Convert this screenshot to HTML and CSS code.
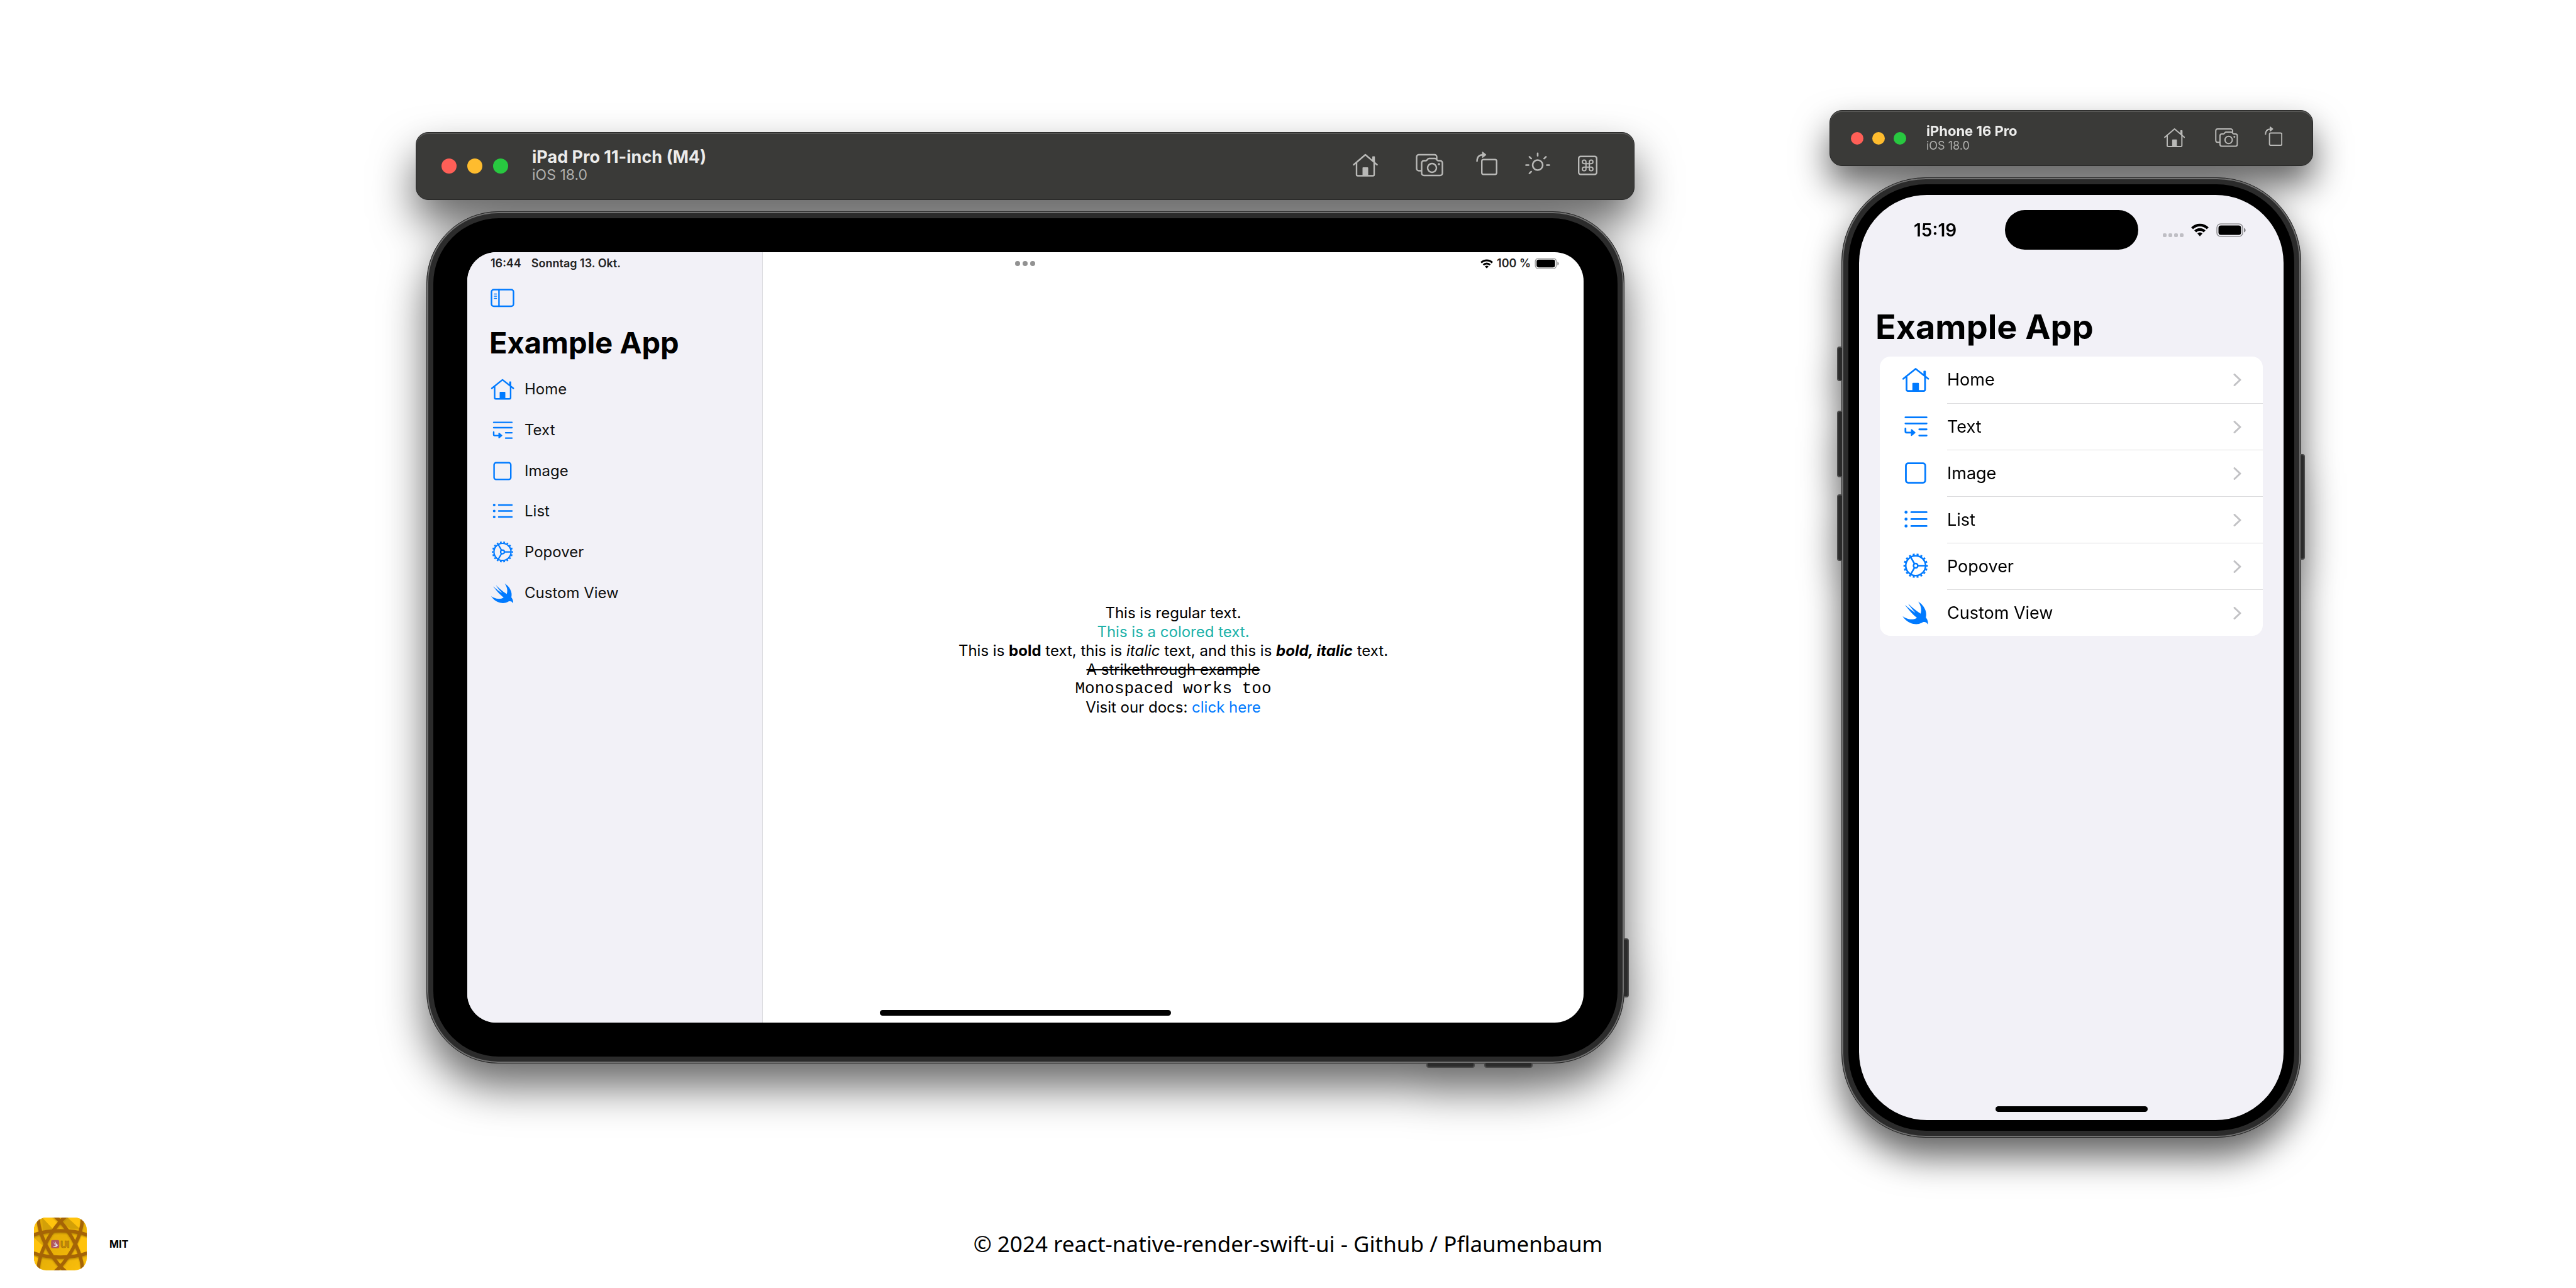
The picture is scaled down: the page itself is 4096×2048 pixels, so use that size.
FILE: index.html
```html
<!DOCTYPE html>
<html lang="en">
<head>
<meta charset="utf-8">
<meta name="viewport" content="width=device-width, initial-scale=1">
<title>react-native-render-swift-ui</title>
<link rel="stylesheet" href="styles.css">
</head>
<body>
<svg class="sprite" aria-hidden="true">
  <symbol id="tool-home" viewBox="0 0 40 48">
    <g fill="none" stroke="currentColor" stroke-width="2.4" stroke-linecap="round" stroke-linejoin="round">
      <path d="M1.4 22 20 6l18.6 16"/><path d="M6 19v18.5a2 2 0 0 0 2 2h24a2 2 0 0 0 2-2V19"/>
    </g>
    <path fill="currentColor" d="M31 9.5a1 1 0 0 1 1-1h2.200a1 1 0 0 1 1 1V19L31 15.500zM15.500 27a1 1 0 0 1 1-1h7a1 1 0 0 1 1 1v12h-9z"/>
  </symbol>
  <symbol id="tool-camera" viewBox="0 0 44 48">
    <g fill="none" stroke="currentColor" stroke-width="2.4" stroke-linecap="round" stroke-linejoin="round">
      <path d="M8.500 31.500H5a3.500 3.500 0 0 1-3.500-3.500V9.500A3.500 3.500 0 0 1 5 6h25a3.500 3.500 0 0 1 3.500 3.500v3"/>
      <path d="M13 15.500h3.200c1 0 1.500-.5 2-1.200l.8-1.200c.6-.8 1.200-1.100 2.200-1.100h9.600c1 0 1.600.3 2.200 1.100l.8 1.200c.5.700 1 1.200 2 1.200H39a3.500 3.500 0 0 1 3.500 3.500v16.500A3.500 3.500 0 0 1 39 39H13a3.500 3.500 0 0 1-3.500-3.500V19a3.500 3.500 0 0 1 3.500-3.500z"/>
      <circle cx="26" cy="27" r="7"/>
    </g>
    <circle cx="37" cy="21" r="1.800" fill="currentColor"/>
  </symbol>
  <symbol id="tool-rotate" viewBox="0 0 34 48">
    <g fill="none" stroke="currentColor" stroke-width="2.4" stroke-linecap="round">
      <rect x="9.200" y="13.800" width="23.500" height="23.500" rx="2.500"/>
      <path stroke-linecap="butt" d="M1.500 17C1.500 10 4.500 6.500 10 6.200"/>
    </g>
    <path fill="currentColor" d="M9.600 2.200c0-.8.700-1.100 1.300-.6l5 3.900c.5.400.5.900 0 1.300l-5 4c-.6.500-1.300.2-1.300-.6z"/>
  </symbol>
  <symbol id="tool-sun" viewBox="0 0 40 48">
    <g fill="none" stroke="currentColor" stroke-width="2.600" stroke-linecap="round">
      <circle cx="20" cy="22.500" r="8"/>
      <path d="M20 3.800v4M1.500 22.500h4M34.500 22.500h4M6.900 9.400l2.800 2.800M33.100 9.400l-2.800 2.800M6.900 35.600l2.800-2.800"/>
    </g>
  </symbol>
  <symbol id="tool-command" viewBox="0 0 31 48">
    <g fill="none" stroke="currentColor" stroke-width="2.400">
      <rect x="1.200" y="8.700" width="28.600" height="28.600" rx="3"/>
      <path stroke-width="2" d="M18.200 17.300v11.400a2.850 2.850 0 1 0 2.850-2.850H9.950a2.850 2.850 0 1 0 2.850 2.850V17.300a2.850 2.850 0 1 0-2.850 2.850h11.100a2.850 2.850 0 1 0-2.850-2.850"/>
    </g>
  </symbol>

  <symbol id="nav-home" viewBox="-1 0 38 38">
    <g fill="none" stroke="currentColor" stroke-width="2.400" stroke-linecap="round" stroke-linejoin="round">
      <path d="M1 17.500 18 3.900l17.300 13.600"/><path d="M5.500 15v17.200a2 2 0 0 0 2 2h21.400a2 2 0 0 0 2-2V15"/>
    </g>
    <path fill="currentColor" d="M28.700 7.500a1 1 0 0 1 1-1h1.300a1 1 0 0 1 1 1v8l-3.300-2.600zM13.500 24a1 1 0 0 1 1-1h7a1 1 0 0 1 1 1v10h-9z"/>
  </symbol>
  <symbol id="nav-text" viewBox="-1 0 38 38">
    <g fill="none" stroke="currentColor" stroke-width="2.400" stroke-linecap="round" stroke-linejoin="round">
      <path d="M4 6.600h29M4 15h29M23 23.100h10M23 31.600h10M4 22v4a1.600 1.600 0 0 0 1.600 1.600H11"/>
    </g>
    <path fill="currentColor" d="M11.500 24c0-1 .8-1.400 1.600-.8l4.200 3.500c.6.500.6 1.100 0 1.600l-4.200 3.500c-.8.600-1.600.2-1.600-.8z"/>
  </symbol>
  <symbol id="nav-image" viewBox="-1 0 38 38">
    <rect x="4.600" y="5.800" width="26.600" height="26.600" rx="3.200" fill="none" stroke="currentColor" stroke-width="2.400"/>
  </symbol>
  <symbol id="nav-list" viewBox="-1 0 38 38">
    <path d="M12 9h21M12 18.500h21M12 28h21" fill="none" stroke="currentColor" stroke-width="2.400" stroke-linecap="round"/>
    <g fill="currentColor"><circle cx="4.800" cy="9" r="2.100"/><circle cx="4.800" cy="18.500" r="2.100"/><circle cx="4.800" cy="28" r="2.100"/></g>
  </symbol>
  <symbol id="nav-gear" viewBox="-1 0 38 38">
    <g fill="none" stroke="currentColor" stroke-width="2.200">
      <circle cx="18" cy="18.600" r="13.600"/>
      <circle cx="18" cy="18.600" r="15.600" pathLength="72" stroke-dasharray="2 2" stroke-dashoffset="1"/>
      <circle cx="18" cy="18.600" r="3"/>
      <path d="M21 18.600h10.600M16.500 16 11.200 6.800M16.500 21.200l-5.300 9.200"/>
    </g>
  </symbol>
  <symbol id="nav-swift" viewBox="-1 0 38 38">
    <path transform="translate(-4.700 -2.800) scale(1.930)" fill="currentColor" d="M13.543 3.410c4.114 2.470 6.545 7.162 5.549 11.131-.024.093-.050.181-.076.272l.002.001c2.062 2.538 1.500 5.258 1.236 4.745-1.072-2.086-3.066-1.568-4.088-1.043a6.803 6.803 0 0 1-.281.158l-.020.012-.002.002c-2.115 1.123-4.957 1.205-7.812-.022a12.568 12.568 0 0 1-5.640-4.838c.649.480 1.350.902 2.097 1.252 3.019 1.414 6.051 1.311 8.197-.002C9.651 12.730 7.101 9.670 5.146 7.191a10.628 10.628 0 0 1-1.005-1.384c2.340 2.142 6.038 4.830 7.365 5.576C8.690 8.408 6.208 4.743 6.324 4.860c4.436 4.466 8.527 6.996 8.527 6.996.154.085.270.154.360.213.085-.215.160-.437.224-.668.708-2.588-.090-5.548-1.893-7.992z"/>
  </symbol>
  <symbol id="chevron" viewBox="0 0 13 20">
    <path d="M2 1.500 11 10l-9 8.500" fill="none" stroke="currentColor" stroke-width="3" stroke-linecap="round" stroke-linejoin="round"/>
  </symbol>
  <symbol id="wifi" viewBox="0 0 28 21">
    <g fill="none" stroke="currentColor" stroke-width="4.200">
      <path d="M1.600 7.900a17.600 17.600 0 0 1 24.800 0"/><path d="M6.600 13a10.500 10.500 0 0 1 14.800 0"/>
    </g>
    <path fill="currentColor" d="M9.900 16.300a5.800 5.800 0 0 1 8.200 0L14 20.700z"/>
  </symbol>
  <symbol id="battery" viewBox="0 0 48 22">
    <rect x="1" y="1" width="41" height="20" rx="6" fill="none" stroke="currentColor" stroke-opacity=".4" stroke-width="1.600"/>
    <rect x="3.500" y="3.500" width="36" height="15" rx="4" fill="currentColor"/>
    <path d="M44 7.500c3.600 1 3.600 6 0 7z" fill="currentColor" fill-opacity=".45"/>
  </symbol>
</svg>

<main class="stage">
  <section class="simulator simulator--tablet" aria-label="iPad simulator">
    <header class="toolbar">
      <div class="lights"><span class="light light--close"></span><span class="light light--min"></span><span class="light light--zoom"></span></div>
      <div class="device-name"><h2 class="device-title">iPad Pro 11-inch (M4)</h2><p class="device-os">iOS 18.0</p></div>
      <div class="tools">
        <button class="tool tool--spaced" type="button" aria-label="Home"><svg class="tool-icon" viewBox="0 0 40 48"><use href="#tool-home"/></svg></button>
        <button class="tool tool--spaced" type="button" aria-label="Screenshot"><svg class="tool-icon" viewBox="0 0 44 48"><use href="#tool-camera"/></svg></button>
        <button class="tool" type="button" aria-label="Rotate"><svg class="tool-icon" viewBox="0 0 34 48"><use href="#tool-rotate"/></svg></button>
        <button class="tool" type="button" aria-label="Appearance"><svg class="tool-icon" viewBox="0 0 40 48"><use href="#tool-sun"/></svg></button>
        <button class="tool" type="button" aria-label="Keyboard shortcuts"><svg class="tool-icon" viewBox="0 0 31 48"><use href="#tool-command"/></svg></button>
      </div>
    </header>
    <div class="frame">
      <span class="key key--tablet-power"></span><span class="key key--tablet-up"></span><span class="key key--tablet-down"></span>
      <div class="bezel">
        <div class="tablet-screen">
          <aside class="sidebar">
            <button class="sidebar-toggle" type="button" aria-label="Toggle sidebar">
              <svg class="sidebar-toggle-icon" viewBox="0 0 38 30" fill="none" stroke="currentColor" stroke-width="2.400" stroke-linecap="round">
                <rect x="1.500" y="1.500" width="35" height="26.500" rx="3.500"/><path d="M13.400 1.500V28"/><path stroke-width="1.600" d="M6 8.500h3.500M6 12h3.500M6 15.500h3.500"/>
              </svg>
            </button>
            <h1 class="app-title">Example App</h1>
            <nav class="menu">
              <a class="menu-item" href="#home"><svg class="menu-icon"><use href="#nav-home"/></svg>Home</a>
              <a class="menu-item" href="#text"><svg class="menu-icon"><use href="#nav-text"/></svg>Text</a>
              <a class="menu-item" href="#image"><svg class="menu-icon"><use href="#nav-image"/></svg>Image</a>
              <a class="menu-item" href="#list"><svg class="menu-icon"><use href="#nav-list"/></svg>List</a>
              <a class="menu-item" href="#popover"><svg class="menu-icon"><use href="#nav-gear"/></svg>Popover</a>
              <a class="menu-item" href="#custom"><svg class="menu-icon"><use href="#nav-swift"/></svg>Custom View</a>
            </nav>
          </aside>
          <div class="detail">
            <p>This is regular text.</p>
            <p class="colored">This is a colored text.</p>
            <p>This is <b>bold</b> text, this is <i>italic</i> text, and this is <b><i>bold, italic</i></b> text.</p>
            <p><s>A strikethrough example</s></p>
            <p class="mono">Monospaced works too</p>
            <p>Visit our docs: <a class="link" href="#docs">click here</a></p>
          </div>
          <div class="tablet-status">
            <div class="tablet-clock"><span>16:44</span><span>Sonntag 13. Okt.</span></div>
            <div class="multitask"><span></span><span></span><span></span></div>
            <div class="tablet-power"><svg class="wifi-icon"><use href="#wifi"/></svg><span>100 %</span><svg class="battery-icon"><use href="#battery"/></svg></div>
          </div>
          <div class="home-bar"></div>
        </div>
      </div>
    </div>
  </section>

  <section class="simulator simulator--phone" aria-label="iPhone simulator">
    <header class="toolbar">
      <div class="lights"><span class="light light--close"></span><span class="light light--min"></span><span class="light light--zoom"></span></div>
      <div class="device-name"><h2 class="device-title">iPhone 16 Pro</h2><p class="device-os">iOS 18.0</p></div>
      <div class="tools">
        <button class="tool tool--spaced" type="button" aria-label="Home"><svg class="tool-icon" viewBox="0 0 40 48"><use href="#tool-home"/></svg></button>
        <button class="tool tool--spaced" type="button" aria-label="Screenshot"><svg class="tool-icon" viewBox="0 0 44 48"><use href="#tool-camera"/></svg></button>
        <button class="tool" type="button" aria-label="Rotate"><svg class="tool-icon" viewBox="0 0 34 48"><use href="#tool-rotate"/></svg></button>
      </div>
    </header>
    <div class="frame">
      <span class="key key--phone-action"></span><span class="key key--phone-up"></span><span class="key key--phone-down"></span><span class="key key--phone-power"></span>
      <div class="bezel">
        <div class="phone-screen">
          <div class="phone-status">
            <span class="phone-clock">15:19</span>
            <span class="island"></span>
            <div class="phone-signals"><span class="cellular"><i></i><i></i><i></i><i></i></span><svg class="wifi-icon"><use href="#wifi"/></svg><svg class="battery-icon"><use href="#battery"/></svg></div>
          </div>
          <h1 class="app-title">Example App</h1>
          <nav class="card">
            <a class="card-item" href="#home"><svg class="menu-icon"><use href="#nav-home"/></svg><span class="card-label">Home<svg class="chevron"><use href="#chevron"/></svg></span></a>
            <a class="card-item" href="#text"><svg class="menu-icon"><use href="#nav-text"/></svg><span class="card-label">Text<svg class="chevron"><use href="#chevron"/></svg></span></a>
            <a class="card-item" href="#image"><svg class="menu-icon"><use href="#nav-image"/></svg><span class="card-label">Image<svg class="chevron"><use href="#chevron"/></svg></span></a>
            <a class="card-item" href="#list"><svg class="menu-icon"><use href="#nav-list"/></svg><span class="card-label">List<svg class="chevron"><use href="#chevron"/></svg></span></a>
            <a class="card-item" href="#popover"><svg class="menu-icon"><use href="#nav-gear"/></svg><span class="card-label">Popover<svg class="chevron"><use href="#chevron"/></svg></span></a>
            <a class="card-item" href="#custom"><svg class="menu-icon"><use href="#nav-swift"/></svg><span class="card-label">Custom View<svg class="chevron"><use href="#chevron"/></svg></span></a>
          </nav>
          <div class="home-bar"></div>
        </div>
      </div>
    </div>
  </section>
</main>

<footer class="footer">
  <div class="license">
    <svg class="app-icon" viewBox="0 0 142 142" role="img" aria-label="App icon">
      <defs>
        <clipPath id="app-clip"><rect width="142" height="142" rx="33"/></clipPath>
        <linearGradient id="app-gold" x1="0" y1="0" x2="1" y2="1"><stop offset="0" stop-color="#e0a808"/><stop offset=".5" stop-color="#e8b007"/><stop offset="1" stop-color="#fcc00c"/></linearGradient>
        <filter id="app-soft" x="-20%" y="-20%" width="140%" height="140%"><feGaussianBlur stdDeviation="2"/></filter>
      </defs>
      <g clip-path="url(#app-clip)">
        <rect width="142" height="142" fill="url(#app-gold)"/>
        <path fill="#ffc30d" d="M22 0h34l14 14-18 18zM90 0h34v30zM0 0h18l-2 44L0 46zM0 54l24 22L18 98 0 90zM128 48l14 6v36l-14 6-10-25zM0 102l12 8v32H0z"/>
        <path fill="#d3a008" d="M22 0 52 32 24 36zM90 0 122 30 98 30 76 14z"/>
        <g fill="none" stroke="#7a5505" stroke-opacity=".4" stroke-width="9" filter="url(#app-soft)" transform="translate(0 3)">
          <ellipse cx="71" cy="71" rx="100" ry="35.500"/><ellipse cx="71" cy="71" rx="100" ry="35.500" transform="rotate(60 71 71)"/><ellipse cx="71" cy="71" rx="100" ry="35.500" transform="rotate(-60 71 71)"/>
        </g>
        <g fill="none" stroke="#a56406" stroke-width="9">
          <ellipse cx="71" cy="71" rx="100" ry="35.500"/><ellipse cx="71" cy="71" rx="100" ry="35.500" transform="rotate(60 71 71)"/><ellipse cx="71" cy="71" rx="100" ry="35.500" transform="rotate(-60 71 71)"/>
        </g>
        <rect x="46" y="60.500" width="22" height="22" rx="4" fill="#b1565c"/>
        <path fill="#dfe3f0" d="M52 64.500c2 4 4.500 7 7.500 9.500-2-3.500-3-7-3-11 2 4.500 3.500 7.500 6.500 10.500 1-.5 2-.3 2.500.5l-1.500 1c-1.500 3.500-5 4.500-9 3.500l-4.500 1.500 3.500-3.500 5-.5c-3.500-3-6-7-7-11.500z"/>
        <text class="app-icon-text" x="71" y="81">UI</text>
      </g>
    </svg>
    <span class="license-name">MIT</span>
  </div>
  <p class="copyright">© 2024 react-native-render-swift-ui - Github / Pflaumenbaum</p>
</footer>
</body>
</html>
```

FILE: styles.css
```css
* { box-sizing: border-box; }

body {
  margin: 0;
  min-height: 100vh;
  display: flex;
  flex-direction: column;
  background: #fff;
  color: #000;
  font-family: Inter, "Liberation Sans", sans-serif;
}

h1, h2, p { margin: 0; }
a { color: inherit; text-decoration: none; }
button { padding: 0; border: 0; background: none; color: inherit; }
svg { display: block; flex: none; }
.sprite { position: absolute; width: 0; height: 0; }

.stage {
  flex: 1;
  display: grid;
  grid-template-columns: 1938fr 769fr;
  column-gap: 310px;
  align-items: start;
  padding: 175px 418px 0 661px;
}

.simulator { display: flex; flex-direction: column; gap: 18px; }

.simulator--tablet {
  --bar-height: 108px;
  --light: 24px;
  --light-gap: 17px;
  --title: 27px;
  --subtitle: 23px;
  --line: 29px;
  --tool-height: 48px;
  --tool-gap: 44px;
  --tool-space: 8px;
  --menu-icon: 38px;
  --bezel: 54px;
  --outer-radius: 114px;
  --inner-radius: 104px;
  margin-top: 35px;
  filter: drop-shadow(0 36px 34px rgba(0, 0, 0, .6));
}

.simulator--phone {
  --bar-height: 89px;
  --light: 20px;
  --light-gap: 14px;
  --title: 22px;
  --subtitle: 18px;
  --line: 24px;
  --tool-height: 40px;
  --tool-gap: 36px;
  --tool-space: 6px;
  --menu-icon: 44px;
  --bezel: 17px;
  --outer-radius: 134px;
  --inner-radius: 124px;
  filter: drop-shadow(0 30px 28px rgba(0, 0, 0, .62));
}

/* Simulator window bar */
.toolbar {
  height: var(--bar-height);
  display: flex;
  align-items: center;
  border: 1px solid #262626;
  border-radius: 20px;
  background: #3a3a38;
  box-shadow: inset 0 2px 0 #565654;
  color: #b9b9b7;
}
.simulator--tablet .toolbar { padding: 0 58px 0 40px; }
.simulator--phone .toolbar { padding: 0 48px 0 33px; }
.lights { display: flex; gap: var(--light-gap); }
.light { width: var(--light); height: var(--light); border-radius: 50%; }
.light--close { background: #ff5f57; }
.light--min { background: #febc2e; }
.light--zoom { background: #28c840; }
.simulator--tablet .device-name { margin-left: 38px; }
.simulator--phone .device-name { margin-left: 32px; }
.device-title { color: #ececeb; font-size: var(--title); line-height: var(--line); font-weight: 700; }
.device-os { color: #b0b0ae; font-size: var(--subtitle); line-height: var(--line); }
.tools { display: flex; gap: var(--tool-gap); margin-left: auto; }
.tool--spaced { margin: 0 var(--tool-space); }
.tool-icon { height: var(--tool-height); }

/* Device body */
.frame {
  position: relative;
  border: 1px solid #262626;
  border-radius: var(--outer-radius);
  background: #2b2b2b;
  box-shadow: inset 0 0 0 2px #707070;
  padding: 10px;
}
.simulator--tablet .frame { margin: 0 16px 0 17px; }
.simulator--phone .frame { margin: 0 19px; }
.bezel { border-radius: var(--inner-radius); background: #000; padding: var(--bezel); }

.key { position: absolute; border: 2px solid #4a4a4a; background: #2b2b2b; }
.key--tablet-power { left: 100%; bottom: 104px; width: 8px; height: 94px; border-left: 0; border-radius: 0 4px 4px 0; }
.key--tablet-up, .key--tablet-down { top: 100%; width: 77px; height: 8px; border-top: 0; border-radius: 0 0 4px 4px; }
.key--tablet-up { right: 237px; }
.key--tablet-down { right: 145px; }
.key--phone-action, .key--phone-up, .key--phone-down { right: 100%; width: 8px; height: 106px; border-right: 0; border-radius: 4px 0 0 4px; }
.key--phone-action { top: 268px; height: 55px; }
.key--phone-up { top: 370px; }
.key--phone-down { top: 503px; }
.key--phone-power { left: 100%; top: 439px; width: 7px; height: 168px; border-left: 0; border-radius: 0 4px 4px 0; }

.app-title { font-weight: 700; }
.menu-icon { width: var(--menu-icon); height: var(--menu-icon); color: #007aff; }
.home-bar { height: 9px; border-radius: 5px; background: #000; }

/* Tablet screen */
.tablet-screen {
  aspect-ratio: 1775 / 1225;
  display: grid;
  grid-template-columns: 470px 1fr;
  grid-template-rows: 36px 1fr auto;
  border-radius: 46px;
  background: #fff;
  overflow: hidden;
}
.sidebar {
  grid-area: 1 / 1 / -1 / 2;
  padding: 58px 0 0 37px;
  border-right: 1px solid #dcdce0;
  background: #f2f1f7;
}
.sidebar-toggle { display: block; color: #007aff; }
.sidebar-toggle-icon { width: 38px; height: 30px; }
.sidebar .app-title { margin-top: 26px; font-size: 47px; line-height: 60px; margin-left: -2px; }
.menu { display: grid; grid-auto-rows: 1fr; height: 388px; margin-top: 12px; }
.menu-item { display: flex; align-items: center; gap: 16px; font-size: 24px; line-height: 30px; color: #111; }
.detail {
  grid-area: 1 / 2 / -1 / 3;
  display: flex;
  flex-direction: column;
  align-items: center;
  justify-content: center;
  padding-top: 72px;
  font-size: 24px;
  line-height: 30px;
}
.colored { color: #20b2aa; }
.link { color: #007aff; }
.mono { font-family: "Liberation Mono", monospace; font-size: 26px; }

.tablet-status {
  grid-area: 1 / 1 / 2 / -1;
  display: grid;
  grid-template-columns: 1fr auto 1fr;
  align-items: center;
  padding: 0 38px 0 37px;
  font-size: 18px;
  line-height: 20px;
  font-weight: 600;
  color: #222;
}
.tablet-clock { display: flex; gap: 16px; }
.multitask { display: flex; gap: 4px; }
.multitask span { width: 8px; height: 8px; border-radius: 50%; background: #929292; }
.tablet-power { display: flex; align-items: center; justify-content: flex-end; gap: 6px; }
.tablet-power .wifi-icon { width: 20px; height: 15px; color: #000; }
.tablet-power .battery-icon { width: 40px; height: 18px; color: #000; }
.tablet-screen .home-bar { grid-area: 3 / 1 / 4 / -1; justify-self: center; width: 463px; margin-bottom: 11px; }

/* Phone screen */
.phone-screen {
  aspect-ratio: 675 / 1471;
  display: flex;
  flex-direction: column;
  padding: 24px 33px 13px;
  border-radius: 108px;
  background: #f2f1f7;
  overflow: hidden;
}
.phone-status { display: grid; grid-template-columns: 1fr auto 1fr; align-items: center; }
.phone-clock { padding-left: 54px; font-size: 28px; line-height: 32px; font-weight: 600; }
.island { width: 212px; height: 63px; border-radius: 32px; background: #000; }
.phone-signals { display: flex; align-items: center; justify-content: flex-end; gap: 12px; padding-right: 26px; }
.cellular { display: flex; gap: 3px; align-self: flex-end; }
.cellular i { width: 6px; height: 6px; border-radius: 2px; background: #bfbec4; }
.phone-signals .wifi-icon { width: 28px; height: 21px; }
.phone-signals .battery-icon { width: 48px; height: 22px; }
.phone-screen .app-title { margin: 89px 0 13px -7px; font-size: 54px; line-height: 68px; }
.card { border-radius: 17px; background: #fff; }
.card-item { height: 74px; display: flex; align-items: center; gap: 28px; padding-left: 35px; font-size: 27px; line-height: 32px; }
.card-label { flex: 1; align-self: stretch; display: flex; align-items: center; justify-content: space-between; padding-right: 34px; }
.card-item + .card-item .card-label { border-top: 1px solid #dcdcde; }
.chevron { width: 13px; height: 20px; color: #c2c2c5; }
.phone-screen .home-bar { width: 242px; margin: auto auto 0; }

/* Footer */
.footer {
  display: grid;
  grid-template-columns: 1fr auto 1fr;
  align-items: center;
  padding: 0 54px 28px;
}
.license { display: flex; align-items: center; gap: 36px; }
.app-icon { width: 84px; height: 84px; }
.app-icon-text { fill: #c98f0a; stroke: #966309; stroke-width: 1; font-family: Inter, sans-serif; font-size: 24px; font-weight: 700; }
.license-name { font-size: 16px; line-height: 20px; font-weight: 700; }
.copyright { font-family: "Noto Sans", sans-serif; font-size: 35px; line-height: 48px; }
```
